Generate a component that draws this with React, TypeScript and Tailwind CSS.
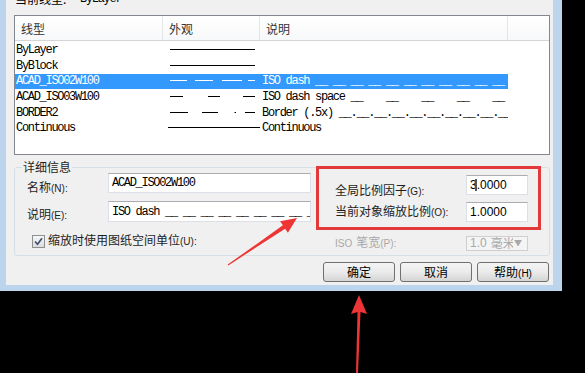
import React from 'react';

const cjk = "font-['Noto_Sans_CJK_SC',sans-serif]";
const mono = "font-['Liberation_Mono',monospace] tracking-[-1.3px]";
const sans = "font-['Liberation_Sans',sans-serif]";

type Row = {
  name: string;
  dash: number[][];
  desc: string;
  selected?: boolean;
};

const rows: Row[] = [
  { name: 'ByLayer', dash: [[7, 92]], desc: '' },
  { name: 'ByBlock', dash: [[7, 92]], desc: '' },
  {
    name: 'ACAD_ISO02W100',
    dash: [[7, 24], [32, 50], [59, 79], [85, 92]],
    desc: 'ISO dash __ __ __ __ __ __ __ __ __ __ __ __ __',
    selected: true,
  },
  {
    name: 'ACAD_ISO03W100',
    dash: [[7, 20], [45, 57], [80, 92]],
    desc: 'ISO dash space __    __    __    __    __    __',
  },
  {
    name: 'BORDER2',
    dash: [[7, 25], [39, 55], [71.5, 73], [82, 92]],
    desc: 'Border (.5x) __.__.__.__.__.__.__.__.__.__.__.',
  },
  { name: 'Continuous', dash: [[5, 97]], desc: 'Continuous' },
];

function LinePreview({ dash, color }: { dash: number[][]; color: string }) {
  return (
    <svg width="97" height="4" className="block">
      {dash.map(([a, b], i) => (
        <line key={i} x1={a} x2={b} y1="1.5" y2="1.5" stroke={color} strokeWidth="1" />
      ))}
    </svg>
  );
}

function TextBox({ value, className = '' }: { value: string; className?: string }) {
  return (
    <div
      className={`flex items-center overflow-hidden whitespace-pre bg-white border border-[#dbdfe6] border-t-[#abadb3] pl-[3px] text-[12px] text-black ${className}`}
    >
      {value}
    </div>
  );
}

function Label({ text, hot, className = '' }: { text: string; hot: string; className?: string }) {
  return (
    <div className={`flex items-baseline text-[12px] leading-[14px] text-[#1e1e1e] ${cjk} ${className}`}>
      <span>{text}</span>
      <span className={`text-[10px] ${sans}`}>({hot}):</span>
    </div>
  );
}

function Button({ children }: { children: React.ReactNode }) {
  return (
    <button
      className={`h-[20px] w-[72px] rounded-[3px] border border-[#707070] bg-linear-to-b from-[#f4f4f4] via-[#ebebeb] to-[#d4d4d4] text-[12px] leading-none text-black ${cjk}`}
    >
      {children}
    </button>
  );
}

export default function App() {
  return (
    <div className="relative h-[373px] w-[585px] overflow-hidden bg-black">
      <div className="h-[291px] w-[562px] bg-[#bcd4ec] pl-[6px] pr-[9px] pb-[6px]">
        <div className="flex h-[285px] flex-col bg-[#f0f0f0]">
          {/* current linetype, cut at the top */}
          <div className="h-[15px] pl-[9px]">
            <div className={`mt-[-7px] flex h-[12px] items-center text-[12px] text-black ${cjk}`}>
              <span className="w-[65px]">当前线型:</span>
              <span className={mono}>ByLayer</span>
            </div>
          </div>

          {/* linetype list */}
          <div className="ml-[8px] h-[140px] w-[536px] border border-[#828790] bg-white">
            <div className={`flex h-[25px] border-b border-[#d5d5d5] bg-linear-to-b from-white to-[#f7f8f9] text-[12px] text-[#333] ${cjk}`}>
              <div className="flex w-[148px] items-center border-r border-[#e3e5e8] pl-[6px] pt-[2px]">线型</div>
              <div className="flex w-[97px] items-center border-r border-[#e3e5e8] pl-[6px] pt-[2px]">外观</div>
              <div className="flex w-[248px] items-center border-r border-[#e3e5e8] pl-[6px] pt-[2px]">说明</div>
              <div className="flex-1" />
            </div>
            <div className="pt-[1.5px]">
              {rows.map((r) => (
                <div
                  key={r.name}
                  className={`flex h-[15.6px] w-[493px] items-center text-[12px] ${mono} ${
                    r.selected ? 'bg-[#3399ff] text-white' : 'text-black'
                  }`}
                >
                  <div className="w-[148px] pl-[1px]">{r.name}</div>
                  <div className="w-[97px]">
                    <LinePreview dash={r.dash} color={r.selected ? '#ffffff' : '#000000'} />
                  </div>
                  <div className="w-[248px] overflow-hidden whitespace-pre pl-[2px]">{r.desc}</div>
                </div>
              ))}
            </div>
          </div>

          {/* details */}
          <fieldset className="ml-[8px] mt-[6px] h-[95px] w-[536px] rounded-[3px] border border-[#d5dfe5]">
            <legend className={`ml-[7px] px-[1px] text-[12px] leading-[12px] text-[#1e1e1e] ${cjk}`}>详细信息</legend>
            <div className="flex">
              <div className="flex w-[296px] flex-col pl-[12px]">
                <div className="flex items-end">
                  <Label text="名称" hot="N" className="mb-[-3px] w-[81px]" />
                  <TextBox value="ACAD_ISO02W100" className={`h-[20px] w-[203px] ${mono}`} />
                </div>
                <div className="mt-[8px] flex items-end">
                  <Label text="说明" hot="E" className="mb-[-1px] w-[81px]" />
                  <TextBox
                    value="ISO dash __ __ __ __ __ __ __ __ __ __ __ __ __"
                    className={`h-[21px] w-[203px] ${mono}`}
                  />
                </div>
                <div className="mt-[11px] flex items-center pl-[5px]">
                  <div className="flex h-[13px] w-[13px] items-center justify-center border border-[#8e8f8f] bg-linear-to-b from-[#f6f6f6] to-[#dcdcdc]">
                    <svg width="9" height="9" viewBox="0 0 9 9">
                      <path d="M1 4.5 L3.5 7.2 L8 1.2" fill="none" stroke="#3b4e74" strokeWidth="1.6" />
                    </svg>
                  </div>
                  <Label text="缩放时使用图纸空间单位" hot="U" className="ml-[3px]" />
                </div>
              </div>

              <div className="ml-[24px] flex flex-col">
                <div className="mt-[2px] flex items-end">
                  <Label text="全局比例因子" hot="G" className="mb-[-4px] w-[131px]" />
                  <div className="relative">
                    <TextBox value="3.0000" className={`h-[20px] w-[62px] ${sans}`} />
                    <div className="absolute left-[9px] top-[4px] h-[12px] w-[2px] bg-[#555]" />
                  </div>
                </div>
                <div className="mt-[7px] flex items-center">
                  <Label text="当前对象缩放比例" hot="O" className="w-[131px]" />
                  <TextBox value="1.0000" className={`h-[20px] w-[62px] ${sans}`} />
                </div>
                <div className="mt-[13px] flex items-center">
                  <div className={`flex w-[131px] items-baseline text-[12px] leading-[14px] text-[#a8a8a8] ${cjk}`}>
                    <span className={`text-[10px] ${sans}`}>ISO</span>
                    <span className="ml-[4px]">笔宽</span>
                    <span className={`text-[10px] ${sans}`}>(P):</span>
                  </div>
                  <div className={`flex h-[15px] w-[62px] items-center overflow-hidden border border-[#cfcfcf] bg-[#f4f4f4] pl-[3px] text-[12px] text-[#a8a8a8] ${cjk}`}>
                    <span className={sans}>1.0</span>
                    <span className="ml-[4px] w-[22px] overflow-hidden whitespace-nowrap">毫米</span>
                    <span className="ml-auto mr-[5px] text-[8px]">▼</span>
                  </div>
                </div>
              </div>
            </div>
          </fieldset>

          {/* buttons */}
          <div className="mt-[6px] flex justify-end gap-[5px] pr-[4px]">
            <Button>确定</Button>
            <Button>取消</Button>
            <Button>
              帮助<span className={`text-[10px] ${sans}`}>(H)</span>
            </Button>
          </div>
        </div>
      </div>

      {/* red annotations */}
      <div className="pointer-events-none absolute left-[316px] top-[166px] h-[64px] w-[225px] border-[3px] border-[#e23a3a]" />
      <svg className="pointer-events-none absolute left-0 top-0" width="585" height="373">
        <polygon
          points="228.3,265.4 285.1,228.7 287.9,232.8 297,218 280.1,221.2 282.9,225.3 227.7,264.6"
          fill="#ee3535"
        />
        <polygon
          points="359,295 367,314 360.5,312 358,373 356,373 357.5,312 351,314"
          fill="#ee3535"
        />
      </svg>
    </div>
  );
}
